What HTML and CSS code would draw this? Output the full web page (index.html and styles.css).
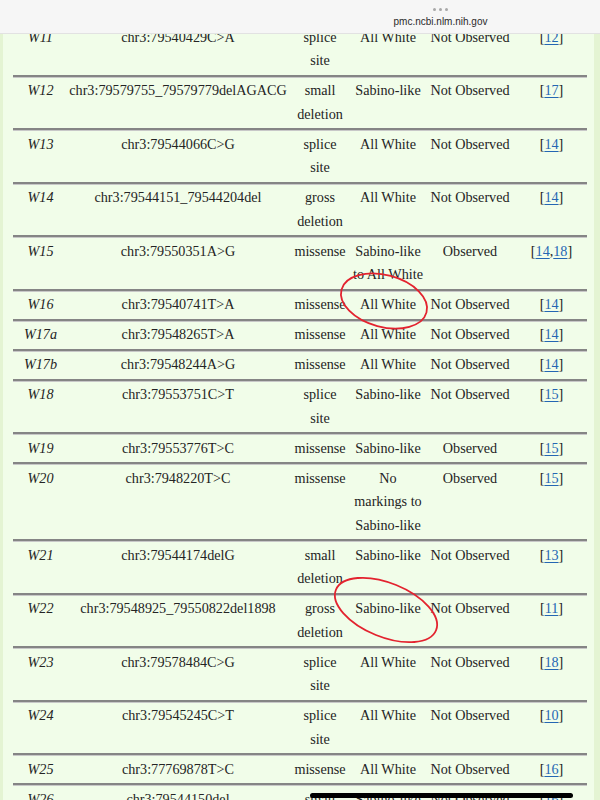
FILE: index.html
```html
<!DOCTYPE html>
<html lang="en">
<head>
<meta charset="utf-8">
<title>PMC table</title>
<link rel="stylesheet" href="styles.css">
</head>
<body>
<div class="page">
  <table class="data">
    <colgroup>
      <col class="c-id"><col class="c-var"><col class="c-type"><col class="c-pheno"><col class="c-roan"><col class="c-ref">
    </colgroup>
    <tbody>
      <tr><td class="id">W11</td><td>chr3:79540429C&gt;A</td><td>splice<br>site</td><td>All White</td><td>Not Observed</td><td>[<a href="#">12</a>]</td></tr>
      <tr><td class="id">W12</td><td>chr3:79579755_79579779delAGACG</td><td>small<br>deletion</td><td>Sabino-like</td><td>Not Observed</td><td>[<a href="#">17</a>]</td></tr>
      <tr><td class="id">W13</td><td>chr3:79544066C&gt;G</td><td>splice<br>site</td><td>All White</td><td>Not Observed</td><td>[<a href="#">14</a>]</td></tr>
      <tr><td class="id">W14</td><td>chr3:79544151_79544204del</td><td>gross<br>deletion</td><td>All White</td><td>Not Observed</td><td>[<a href="#">14</a>]</td></tr>
      <tr><td class="id">W15</td><td>chr3:79550351A&gt;G</td><td>missense</td><td>Sabino-like<br>to All White</td><td>Observed</td><td>[<a href="#">14</a>,<a href="#">18</a>]</td></tr>
      <tr><td class="id">W16</td><td>chr3:79540741T&gt;A</td><td>missense</td><td>All White</td><td>Not Observed</td><td>[<a href="#">14</a>]</td></tr>
      <tr><td class="id">W17a</td><td>chr3:79548265T&gt;A</td><td>missense</td><td>All White</td><td>Not Observed</td><td>[<a href="#">14</a>]</td></tr>
      <tr><td class="id">W17b</td><td>chr3:79548244A&gt;G</td><td>missense</td><td>All White</td><td>Not Observed</td><td>[<a href="#">14</a>]</td></tr>
      <tr><td class="id">W18</td><td>chr3:79553751C&gt;T</td><td>splice<br>site</td><td>Sabino-like</td><td>Not Observed</td><td>[<a href="#">15</a>]</td></tr>
      <tr><td class="id">W19</td><td>chr3:79553776T&gt;C</td><td>missense</td><td>Sabino-like</td><td>Observed</td><td>[<a href="#">15</a>]</td></tr>
      <tr><td class="id">W20</td><td>chr3:7948220T&gt;C</td><td>missense</td><td>No<br>markings to<br>Sabino-like</td><td>Observed</td><td>[<a href="#">15</a>]</td></tr>
      <tr><td class="id">W21</td><td>chr3:79544174delG</td><td>small<br>deletion</td><td>Sabino-like</td><td>Not Observed</td><td>[<a href="#">13</a>]</td></tr>
      <tr><td class="id">W22</td><td>chr3:79548925_79550822del1898</td><td>gross<br>deletion</td><td>Sabino-like</td><td>Not Observed</td><td>[<a href="#">11</a>]</td></tr>
      <tr><td class="id">W23</td><td>chr3:79578484C&gt;G</td><td>splice<br>site</td><td>All White</td><td>Not Observed</td><td>[<a href="#">18</a>]</td></tr>
      <tr><td class="id">W24</td><td>chr3:79545245C&gt;T</td><td>splice<br>site</td><td>All White</td><td>Not Observed</td><td>[<a href="#">10</a>]</td></tr>
      <tr><td class="id">W25</td><td>chr3:77769878T&gt;C</td><td>missense</td><td>All White</td><td>Not Observed</td><td>[<a href="#">16</a>]</td></tr>
      <tr><td class="id">W26</td><td>chr3:79544150del</td><td>small<br>deletion</td><td>Sabino-like</td><td>Not Observed</td><td>[<a href="#">16</a>]</td></tr>
    </tbody>
  </table>
</div>

<svg class="marks" width="600" height="800" viewBox="0 0 600 800" aria-hidden="true">
  <ellipse cx="384" cy="301" rx="44" ry="26" transform="rotate(15 384 301)" />
  <ellipse cx="386" cy="610" rx="54" ry="27" transform="rotate(22 386 610)" />
</svg>

<header class="topbar">
  <div class="tab">
    <span class="dots"><i></i><i></i><i></i></span>
    <span class="url">pmc.ncbi.nlm.nih.gov</span>
  </div>
</header>

<div class="home"></div>
</body>
</html>
```
FILE: styles.css
```css
html, body {
  margin: 0;
  padding: 0;
}
body {
  background: #e4f4d3;
  font-family: "Liberation Serif", "Times New Roman", serif;
  color: #242424;
  overflow: hidden;
  height: 800px;
}
.page {
  margin: 0 6px 0 3px;
  background: #f1fde9;
  padding: 21px 7px 0 10px;
  min-height: 800px;
}
.data {
  width: 574px;
  table-layout: fixed;
  border-collapse: separate;
  border-spacing: 0;
  font-size: 14.2px;
  line-height: 23.5px;
}
.c-id { width: 55px; }
.c-var { width: 220px; }
.c-type { width: 64px; }
.c-pheno { width: 72px; }
.c-roan { width: 92px; }
.c-ref { width: 71px; }
.data td {
  border-top: 2px solid #858585;
  box-shadow: inset 0 1px 0 #c8c8c8;
  padding: 2.75px 0 1.75px;
  text-align: center;
  vertical-align: top;
  white-space: nowrap;
}
.data td.id {
  font-style: italic;
}
.data a {
  color: #2466b3;
  text-decoration: underline;
  text-underline-offset: 2px;
}
.marks {
  position: absolute;
  left: 0;
  top: 0;
  pointer-events: none;
}
.marks ellipse {
  fill: none;
  stroke: #e3232f;
  stroke-width: 1.8;
}
.topbar {
  position: fixed;
  left: 0;
  top: 0;
  width: 600px;
  height: 33px;
  background: #f6f6f6;
  border-bottom: 1px solid #e2e2e2;
  font-family: "Liberation Sans", Arial, sans-serif;
}
.tab {
  position: absolute;
  left: 392px;
  top: 7px;
  width: 97px;
  display: flex;
  flex-direction: column;
  align-items: center;
  gap: 4px;
}
.dots {
  display: flex;
  gap: 3px;
  height: 4px;
  align-items: center;
}
.dots i {
  display: block;
  width: 3px;
  height: 3px;
  border-radius: 50%;
  background: #a8a8a8;
}
.url {
  font-size: 10px;
  line-height: 14px;
  color: #2a2a2a;
  white-space: nowrap;
}
.home {
  position: fixed;
  left: 310px;
  bottom: 2px;
  width: 263px;
  height: 5px;
  border-radius: 3px;
  background: #000;
}
```
